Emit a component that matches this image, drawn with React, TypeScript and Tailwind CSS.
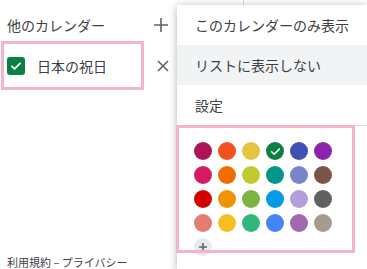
import React from "react";

const palette: { color: string; checked?: boolean }[] = [
  { color: "#AD1457" },
  { color: "#F4511E" },
  { color: "#E4C441" },
  { color: "#0B8043", checked: true },
  { color: "#3F51B5" },
  { color: "#8E24AA" },
  { color: "#D81B60" },
  { color: "#EF6C00" },
  { color: "#C0CA33" },
  { color: "#009688" },
  { color: "#7986CB" },
  { color: "#795548" },
  { color: "#D50000" },
  { color: "#F09300" },
  { color: "#7CB342" },
  { color: "#039BE5" },
  { color: "#B39DDB" },
  { color: "#616161" },
  { color: "#E67C73" },
  { color: "#F6BF26" },
  { color: "#33B679" },
  { color: "#4285F4" },
  { color: "#9E69AF" },
  { color: "#A79B8E" },
];

const Check: React.FC<{ size: number }> = ({ size }) => (
  <svg width={size} height={size} viewBox="0 0 24 24" fill="none">
    <path
      d="M5 12.5l4.5 4.5L19 7.5"
      stroke="white"
      strokeWidth="3"
      strokeLinecap="round"
      strokeLinejoin="round"
    />
  </svg>
);

const App: React.FC = () => {
  return (
    <div
      className="relative w-[367px] h-[269px] overflow-hidden bg-white text-[#3c4043]"
      style={{ fontFamily: '"Noto Sans CJK JP", "Noto Sans", sans-serif' }}
    >
      {/* faint grid line behind the menu */}
      <div className="absolute left-[243px] top-0 h-[6px] w-px bg-[#dadce0]" />

      {/* sidebar */}
      <div className="flex flex-col h-full">
        <div className="flex items-center h-[50px] pl-[7px]">
          <span className="text-[14px] leading-none">他のカレンダー</span>
          <svg
            className="ml-[48px]"
            width="16"
            height="16"
            viewBox="0 0 16 16"
            fill="none"
          >
            <path d="M8 1v14M1 8h14" stroke="#5f6368" strokeWidth="1.6" />
          </svg>
        </div>

        <div className="flex items-center mt-[-9px]">
          <div className="ml-[1px] w-[143px] h-[49px] border-[3px] border-[#f4b4cc] flex items-center pl-[3px] gap-[12px]">
            <div className="w-[18px] h-[18px] rounded-[3px] bg-[#0B8043] flex items-center justify-center">
              <Check size={14} />
            </div>
            <span className="text-[14px] leading-none">日本の祝日</span>
          </div>
          <svg
            className="ml-[12px]"
            width="14"
            height="14"
            viewBox="0 0 14 14"
            fill="none"
          >
            <path d="M2 2l10 10M12 2L2 12" stroke="#5f6368" strokeWidth="1.6" />
          </svg>
        </div>

        <div className="mt-auto pl-[7px] text-[11px] leading-[13px] text-[#3c4043]">
          利用規約 – プライバシー
        </div>
      </div>

      {/* context menu */}
      <div className="absolute left-[177px] top-[5px] right-0 bottom-0 bg-white shadow-[0_1px_8px_rgba(0,0,0,0.3)]">
        <div className="h-10 flex items-center pl-[18px] text-[14px]">
          このカレンダーのみ表示
        </div>
        <div className="h-10 flex items-center pl-[18px] text-[14px] bg-[#f1f3f4]">
          リストに表示しない
        </div>
        <div className="h-10 flex items-center pl-[18px] text-[14px]">設定</div>

        <div className="border-t border-[#dadce0]">
          <div className="relative ml-[-1px] mt-[-1px] w-[179px] h-[128px]">
            <div className="grid grid-cols-[repeat(6,18px)] gap-[6px] pl-[18px] pt-[17px]">
              {palette.map((p) => (
                <div
                  key={p.color}
                  className="w-[18px] h-[18px] rounded-full flex items-center justify-center"
                  style={{ backgroundColor: p.color }}
                >
                  {p.checked && <Check size={13} />}
                </div>
              ))}
              <div className="w-[18px] h-[18px] rounded-full bg-[#e8eaed] flex items-center justify-center">
                <svg width="10" height="10" viewBox="0 0 10 10" fill="none">
                  <path d="M5 1v8M1 5h8" stroke="#5f6368" strokeWidth="1.6" />
                </svg>
              </div>
            </div>
            <div className="pointer-events-none absolute inset-0 border-[3px] border-[#f4b4cc]" />
          </div>
        </div>
      </div>
    </div>
  );
};

export default App;
